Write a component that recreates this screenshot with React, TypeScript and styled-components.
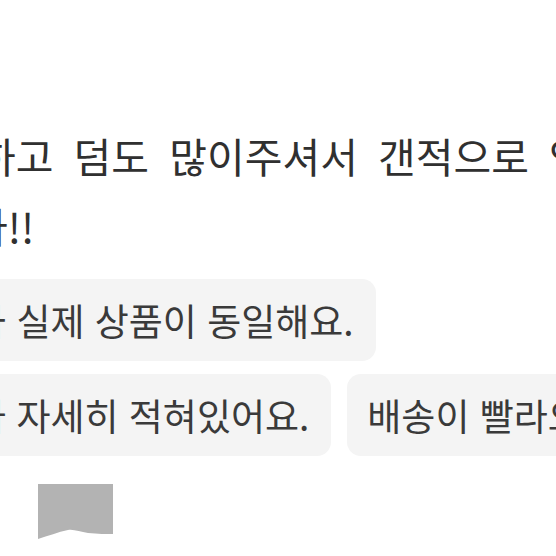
import React from "react";
import styled, { createGlobalStyle } from "styled-components";

const Global = createGlobalStyle`
  html, body {
    margin: 0;
    padding: 0;
    background: #ffffff;
  }
  body {
    width: 556px;
    height: 556px;
    overflow: hidden;
    font-family: "Noto Sans CJK KR", "Noto Sans", sans-serif;
  }
`;

const Page = styled.div`
  width: 556px;
  height: 556px;
  overflow: hidden;
  padding-top: 120px;
  box-sizing: border-box;
  display: flex;
  flex-direction: column;
`;

const Review = styled.div`
  display: flex;
  flex-direction: column;
`;

const ReviewLine = styled.p<{ $indent: number }>`
  margin: 0 0 0 ${(p) => p.$indent}px;
  font-size: 41px;
  line-height: 70px;
  color: #303030;
  word-spacing: 11px;
  white-space: nowrap;
`;

const TagList = styled.div`
  margin: 19px 0 0 -116px;
  display: flex;
  flex-direction: column;
  gap: 13px;
`;

const TagRow = styled.div`
  display: flex;
  gap: 16px;
  flex-wrap: nowrap;
`;

const Tag = styled.span`
  flex: none;
  height: 82px;
  padding: 0 22px 0 20px;
  display: flex;
  align-items: center;
  background: #f4f4f4;
  border-radius: 14px;
  font-size: 37px;
  color: #3a3a3a;
  word-spacing: 2px;
  white-space: nowrap;
`;

const Thumb = styled.svg`
  display: block;
  margin: 28px 0 0 38px;
`;

export default function App() {
  return (
    <>
      <Global />
      <Page>
        <Review>
          <ReviewLine $indent={-22}>하고 덤도 많이주셔서 갠적으로 엄청 만족</ReviewLine>
          <ReviewLine $indent={-30}>다!!</ReviewLine>
        </Review>
        <TagList>
          <TagRow>
            <Tag>사진과 실제 상품이 동일해요.</Tag>
          </TagRow>
          <TagRow>
            <Tag>정보가 자세히 적혀있어요.</Tag>
            <Tag>배송이 빨라요.</Tag>
          </TagRow>
        </TagList>
        <Thumb width="75" height="56" viewBox="0 0 75 56">
          <path
            d="M0 0 H75 V50 C68 50 60 50 50 49 C42 48 36 45 30 46 C20 48 10 52 0 55 Z"
            fill="#b3b3b3"
          />
        </Thumb>
      </Page>
    </>
  );
}
